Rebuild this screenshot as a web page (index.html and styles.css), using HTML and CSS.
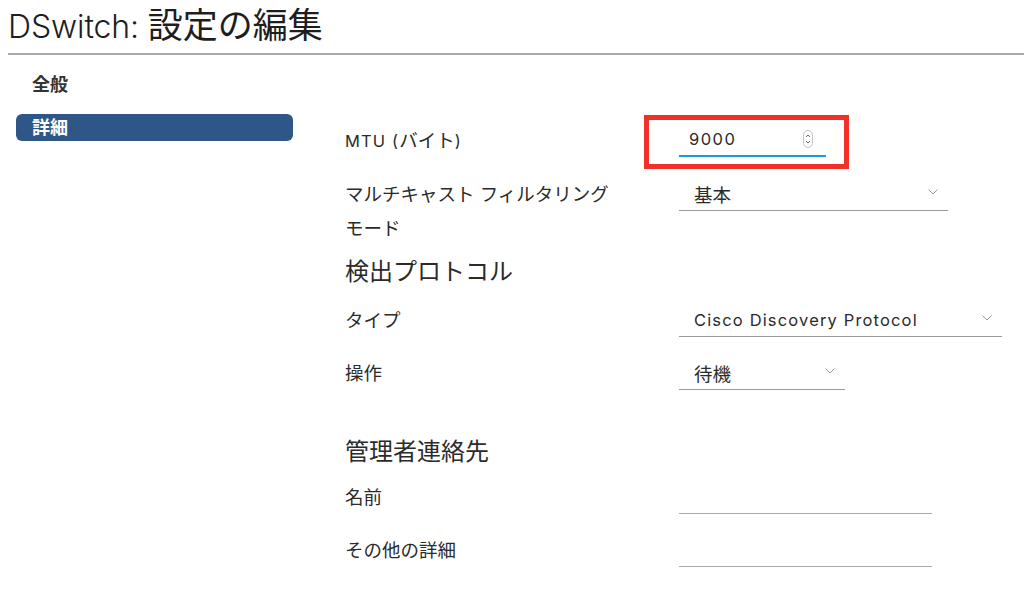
FILE: index.html
```html
<!DOCTYPE html>
<html lang="ja">
<head>
<meta charset="utf-8">
<title>DSwitch: 設定の編集</title>
<link rel="stylesheet" href="styles.css">
</head>
<body>
<header class="page-header">
  <h1 class="title"><span class="title-latin">DSwitch:</span> <span class="title-cjk">設定の編集</span></h1>
</header>
<div class="layout">
  <nav class="nav">
    <div class="nav-item">全般</div>
    <div class="nav-item active">詳細</div>
  </nav>
  <main class="form">
    <section class="group">
      <div class="row">
        <div class="label"><span class="latin">MTU (</span>バイト<span class="latin">)</span></div>
        <div class="control input number highlighted">
          <span class="value latin">9000</span>
          <svg class="spinner" width="10" height="18" viewBox="0 0 10 18">
            <rect x="0.5" y="0.5" width="9" height="17" rx="4.5" fill="#fff" stroke="#c4c4c4"/>
            <path d="M3 7 L5 5 L7 7" fill="none" stroke="#666" stroke-width="1"/>
            <path d="M3 11 L5 13 L7 11" fill="none" stroke="#666" stroke-width="1"/>
          </svg>
        </div>
      </div>
      <div class="row">
        <div class="label">マルチキャスト フィルタリング モード</div>
        <div class="control select w-basic">
          <span class="value">基本</span>
          <svg class="chevron" width="10" height="6" viewBox="0 0 10 6"><path d="M0.5 0.5 L5 5 L9.5 0.5" fill="none" stroke="#9a9a9a" stroke-width="1"/></svg>
        </div>
      </div>
    </section>

    <h2 class="heading heading-discovery">検出プロトコル</h2>
    <section class="group">
      <div class="row">
        <div class="label">タイプ</div>
        <div class="control select w-type">
          <span class="value latin">Cisco Discovery Protocol</span>
          <svg class="chevron" width="10" height="6" viewBox="0 0 10 6"><path d="M0.5 0.5 L5 5 L9.5 0.5" fill="none" stroke="#9a9a9a" stroke-width="1"/></svg>
        </div>
      </div>
      <div class="row">
        <div class="label">操作</div>
        <div class="control select w-op">
          <span class="value">待機</span>
          <svg class="chevron" width="10" height="6" viewBox="0 0 10 6"><path d="M0.5 0.5 L5 5 L9.5 0.5" fill="none" stroke="#9a9a9a" stroke-width="1"/></svg>
        </div>
      </div>
    </section>

    <h2 class="heading heading-admin">管理者連絡先</h2>
    <section class="group">
      <div class="row">
        <div class="label">名前</div>
        <div class="control input text-field"></div>
      </div>
      <div class="row">
        <div class="label">その他の詳細</div>
        <div class="control input text-field"></div>
      </div>
    </section>
  </main>
</div>
</body>
</html>
```

FILE: styles.css
```css
* { box-sizing: border-box; }

html, body {
  margin: 0;
  padding: 0;
  background: #ffffff;
}

body {
  font-family: "Inter", "Noto Sans CJK JP", sans-serif;
  color: #2b2b2b;
  width: 1024px;
  height: 593px;
  overflow: hidden;
}

.page-header {
  margin-left: 8px;
  border-bottom: 2px solid #a9a9a9;
  padding-top: 1px;
}

.title {
  margin: 0;
  height: 52px;
  font-weight: 400;
  font-size: 31px;
  line-height: 52px;
  color: #1e1e1e;
  white-space: nowrap;
  overflow: visible;
}

.title-latin {
  font-size: 32px;
  font-weight: 300;
  letter-spacing: -0.1px;
  line-height: 1;
}

.title-cjk {
  font-size: 35px;
  font-weight: 400;
  line-height: 1;
}

.layout {
  display: flex;
  align-items: flex-start;
}

.nav {
  width: 277px;
  margin-left: 16px;
  padding-top: 16px;
  display: flex;
  flex-direction: column;
  gap: 15px;
}

.nav-item {
  height: 28px;
  line-height: 28px;
  padding-left: 16px;
  font-size: 18px;
  font-weight: 700;
  color: #333333;
}

.nav-item.active {
  height: 27px;
  line-height: 27px;
  background: #2e5686;
  color: #ffffff;
  border-radius: 6px;
}

.form {
  margin-left: 52px;
  padding-top: 68px;
  flex: 1;
}

.group {
  display: flex;
  flex-direction: column;
  gap: 19px;
}

.row {
  display: flex;
  align-items: flex-start;
}

.label {
  width: 334px;
  padding-right: 40px;
  font-size: 18.5px;
  line-height: 34px;
  color: #2b2b2b;
  word-break: keep-all;
}

.latin {
  font-size: 16.5px;
  letter-spacing: 0.07em;
}

.control {
  position: relative;
  height: 34px;
  display: flex;
  align-items: center;
  font-size: 18.5px;
  color: #2b2b2b;
}

.input.number {
  width: 147px;
  padding-left: 10px;
  border-bottom: 2px solid #1a9ad6;
}

.input.number .value {
  flex: 1;
  letter-spacing: 0.09em;
}

.spinner {
  margin-right: 13px;
  display: block;
}

.highlighted::before {
  content: "";
  position: absolute;
  left: -35px;
  right: -23px;
  top: -8px;
  bottom: -14px;
  border: 5px solid #f2302a;
  pointer-events: none;
}

.select {
  padding-left: 15px;
  border-bottom: 1px solid #9a9a9a;
}

.select .value {
  flex: 1;
}

.select .chevron {
  display: block;
  margin-right: 10px;
  margin-top: -3px;
}

.w-basic { width: 269px; }
.w-type { width: 323px; }
.w-op { width: 166px; }

.text-field {
  width: 253px;
  border-bottom: 1px solid #a9a9a9;
}

.heading {
  margin: 0;
  font-size: 24px;
  font-weight: 400;
  line-height: 32px;
  color: #2b2b2b;
}

.heading-discovery {
  margin-top: 11px;
  margin-bottom: 15px;
}

.heading-admin {
  margin-top: 46px;
  margin-bottom: 12px;
}
```
